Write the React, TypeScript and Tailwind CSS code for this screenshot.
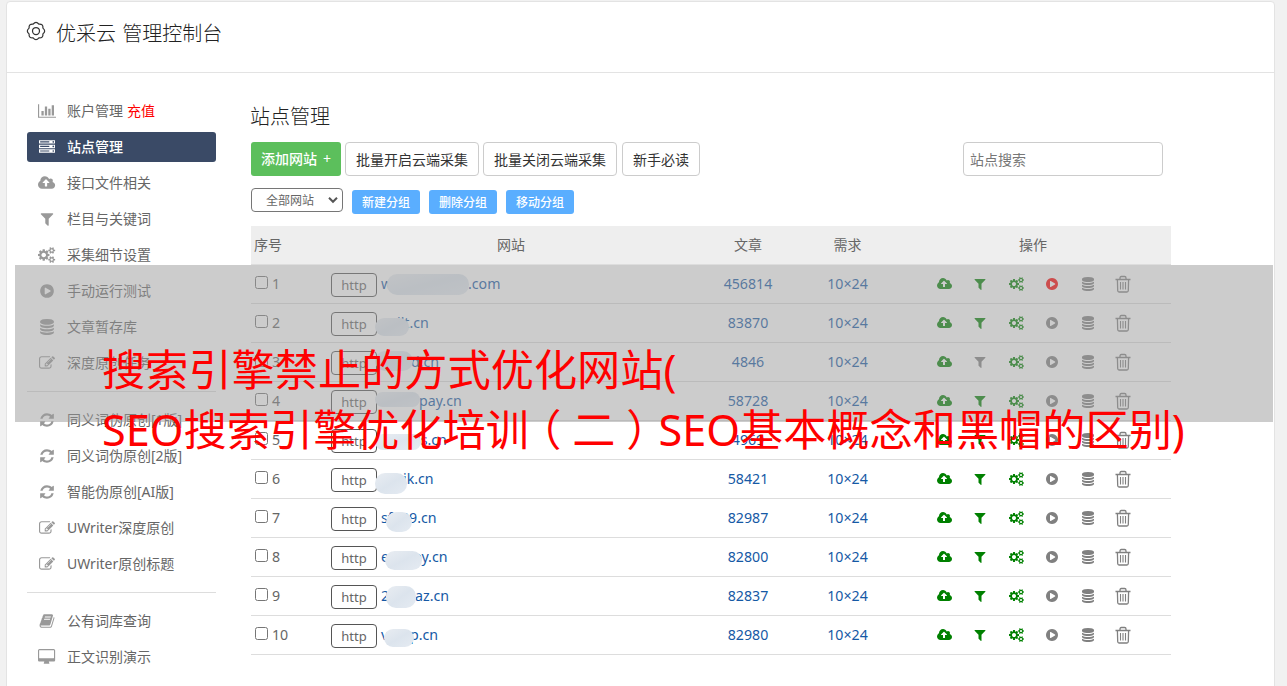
import React from "react";

type IconDef = { vb: string; d: string };

const small =
  "v140q0 16-149 31-12 27-30 52 51 113 51 138 0 4-4 7-122 71-124 71-8 0-46-47t-52-68q-20 2-30 2t-30-2q-14 21-52 68t-46 47q-2 0-124-71-4-3-4-7 0-25 51-138-18-25-30-52-149-15-149-31v-140q0-16 149-31 13-29 30-52-51-113-51-138 0-4 4-7 4-2 35-20t59-34 30-16q8 0 46 46.5t52 67.5q20-2 30-2t30 2q51-71 92-112l6-2q4 0 124 70 4 3 4 7 0 25-51 138 17 23 30 52 149 15 149 31z";

const icons = {
  chart: { vb: "0 0 2048 1792", d: "M640 896v512h-256v-512h256zm384-512v1024h-256v-1024h256zm1024 1152v128h-2048v-1536h128v1408h1920zm-640-896v768h-256v-768h256zm384-384v1152h-256v-1152h256z" },
  server: { vb: "0 0 1792 1792", d: "M128 1408h1024v-128h-1024v128zm0-512h1024v-128h-1024v128zm1568 448q0-40-28-68t-68-28-68 28-28 68 28 68 68 28 68-28 28-68zm-1568-960h1024v-128h-1024v128zm1568 448q0-40-28-68t-68-28-68 28-28 68 28 68 68 28 68-28 28-68zm0-512q0-40-28-68t-68-28-68 28-28 68 28 68 68 28 68-28 28-68zm96 832v384h-1792v-384h1792zm0-512v384h-1792v-384h1792zm0-512v384h-1792v-384h1792z" },
  cloud: { vb: "0 0 1920 1792", d: "M1280 864q0-14-9-23l-352-352q-9-9-23-9t-23 9l-351 351q-10 12-10 24 0 14 9 23t23 9h224v352q0 13 9.5 22.5t22.5 9.5h192q13 0 22.5-9.5t9.5-22.5v-352h224q13 0 22.5-9.5t9.5-22.5zm640 288q0 159-112.5 271.5t-271.5 112.5h-1088q-185 0-316.5-131.5t-131.5-316.5q0-130 70-240t188-165q-2-30-2-43 0-212 150-362t362-150q156 0 285.5 87t188.5 231q71-62 166-62 106 0 181 75t75 181q0 76-41 138 130 31 213.5 135.5t83.5 238.5z" },
  filter: { vb: "0 0 1792 1792", d: "M1595 295q17 41-14 70l-493 493v742q0 42-39 59-13 5-25 5-27 0-45-19l-256-256q-19-19-19-45v-486l-493-493q-31-29-14-70 17-39 59-39h1280q42 0 59 39z" },
  cogs: { vb: "0 0 1920 1792", d: "M896 896q0-106-75-181t-181-75-181 75-75 181 75 181 181 75 181-75 75-181zm768 512q0-52-38-90t-90-38-90 38-38 90q0 53 37.5 90.5t90.5 37.5 90.5-37.5 37.5-90.5zm0-1024q0-52-38-90t-90-38-90 38-38 90q0 53 37.5 90.5t90.5 37.5 90.5-37.5 37.5-90.5zm-384 421v185q0 10-7 19.5t-16 10.5l-155 24q-11 35-32 76 34 48 90 115 7 11 7 20 0 12-7 19-23 30-82.5 89.5t-78.5 59.5q-11 0-21-7l-115-90q-37 19-77 31-11 108-23 155-7 24-30 24h-186q-11 0-20-7.5t-10-17.5l-23-153q-34-10-75-31l-118 89q-7 7-20 7-11 0-21-8-144-133-144-160 0-9 7-19 10-14 41-53t47-61q-23-44-35-82l-152-24q-10-1-17-9.5t-7-19.5v-185q0-10 7-19.5t16-10.5l155-24q11-35 32-76-34-48-90-115-7-11-7-20 0-12 7-20 22-30 82-89t79-59q11 0 21 7l115 90q34-18 77-32 11-108 23-154 7-24 30-24h186q11 0 20 7.5t10 17.5l23 153q34 10 75 31l118-89q8-7 20-7 11 0 21 8 144 133 144 160 0 8-7 19-12 16-42 54t-45 60q23 48 34 82l152 23q10 2 17 10.5t7 19.5zM1920 1338" + small + "M1920 314" + small },
  play: { vb: "0 0 1792 1792", d: "M896 128q209 0 385.5 103t279.5 279.5 103 385.5-103 385.5-279.5 279.5-385.5 103-385.5-103-279.5-279.5-103-385.5 103-385.5 279.5-279.5 385.5-103zm384 823q32-18 32-55t-32-55l-544-320q-31-19-64-1-32 19-32 56v640q0 37 32 56 16 8 32 8 17 0 32-9z" },
  database: { vb: "0 0 1792 1792", d: "M896 768q237 0 443-43t325-127v170q0 69-103 128t-280 93.5-385 34.5-385-34.5-280-93.5-103-128v-170q119 84 325 127t443 43zm0 768q237 0 443-43t325-127v170q0 69-103 128t-280 93.5-385 34.5-385-34.5-280-93.5-103-128v-170q119 84 325 127t443 43zm0-384q237 0 443-43t325-127v170q0 69-103 128t-280 93.5-385 34.5-385-34.5-280-93.5-103-128v-170q119 84 325 127t443 43zm0-1152q208 0 385 34.5t280 93.5 103 128v128q0 69-103 128t-280 93.5-385 34.5-385-34.5-280-93.5-103-128v-128q0-69 103-128t280-93.5 385-34.5z" },
  edit: { vb: "0 0 1792 1792", d: "M888 1184l116-116-152-152-116 116v56h96v96h56zm440-720q-16-16-33 1l-350 350q-17 17-1 33t33-1l350-350q17-17 1-33zm80 594v190q0 119-84.5 203.5t-203.5 84.5h-832q-119 0-203.5-84.5t-84.5-203.5v-832q0-119 84.5-203.5t203.5-84.5h832q63 0 117 25 15 7 18 23 3 17-9 29l-49 49q-14 14-32 8-23-6-45-6h-832q-66 0-113 47t-47 113v832q0 66 47 113t113 47h832q66 0 113-47t47-113v-126q0-13 9-22l64-64q15-15 35-7t20 29zm-96-738l288 288-672 672h-288v-288zm444 132l-92 92-288-288 92-92q28-28 68-28t68 28l152 152q28 28 28 68t-28 68z" },
  refresh: { vb: "0 0 1792 1792", d: "M1639 1056q0 5-1 7-64 268-268 434.5t-478 166.5q-146 0-282.5-55t-243.5-157l-129 129q-19 19-45 19t-45-19-19-45v-448q0-26 19-45t45-19h448q26 0 45 19t19 45-19 45l-137 137q71 66 161 102t187 36q134 0 250-65t186-179q11-17 53-117 8-23 30-23h192q13 0 22.5 9.5t9.5 22.5zm25-800v448q0 26-19 45t-45 19h-448q-26 0-45-19t-19-45 19-45l138-138q-148-137-349-137-134 0-250 65t-186 179q-11 17-53 117-8 23-30 23h-199q-13 0-22.5-9.5t-9.5-22.5v-7q65-268 270-434.5t480-166.5q146 0 284 55.5t245 156.5l130-129q19-19 45-19t45 19 19 45z" },
  book: { vb: "0 0 1792 1792", d: "M1703 478q40 57 18 129l-275 906q-19 64-76.5 107.5t-122.5 43.5h-923q-77 0-148.5-53.5t-99.5-131.5q-24-67-2-127 0-4 3-27t4-37q1-8-3-21.5t-3-19.5q2-11 8-21t16.5-23.5 16.5-23.5q23-38 45-91.5t30-91.5q3-10 .5-30t-.5-28q3-11 17-28t17-23q21-36 42-92t25-90q1-9-2.5-32t.5-28q4-13 22-30.5t22-22.5q19-26 42.5-84.5t27.5-96.5q1-8-3-25.5t-2-26.5q2-8 9-18t18-23 17-21q8-12 16.5-30.5t15-35 16-36 19.5-32 26.5-23.5 36-11.5 47.5 5.5l-1 3q38-9 51-9h761q74 0 114 56t18 130l-274 906q-36 119-71.5 153.5t-128.5 34.5h-869q-27 0-38 15-11 16-1 43 24 70 144 70h923q29 0 56-15.5t35-41.5l300-987q7-22 5-57 38 15 59 43zm-1064 2q-4 13 2 22.5t20 9.5h608q13 0 25.5-9.5t16.5-22.5l21-64q4-13-2-22.5t-20-9.5h-608q-13 0-25.5 9.5t-16.5 22.5zm-83 256q-4 13 2 22.5t20 9.5h608q13 0 25.5-9.5t16.5-22.5l21-64q4-13-2-22.5t-20-9.5h-608q-13 0-25.5 9.5t-16.5 22.5z" },
  desktop: { vb: "-64 0 1920 1792", d: "M1728 992v-832q0-13-9.5-22.5t-22.5-9.5h-1600q-13 0-22.5 9.5t-9.5 22.5v832q0 13 9.5 22.5t22.5 9.5h1600q13 0 22.5-9.5t9.5-22.5zm128-832v1088q0 66-47 113t-113 47h-544q0 37 16 77.5t32 71 16 43.5q0 26-19 45t-45 19h-512q-26 0-45-19t-19-45q0-14 16-44t32-70 16-78h-544q-66 0-113-47t-47-113v-1088q0-66 47-113t113-47h1600q66 0 113 47t47 113z" },
} satisfies Record<string, IconDef>;

type IconName = keyof typeof icons;

function Icon({ name, className }: { name: IconName; className: string }) {
  const icon: IconDef = icons[name];
  return (
    <svg viewBox={icon.vb} className={`w-auto shrink-0 ${className}`} fill="currentColor" fillRule="evenodd">
      <path d={icon.d} />
    </svg>
  );
}

function TrashIcon() {
  return (
    <svg viewBox="0 0 16 18" className="h-[18px] w-4" fill="none" stroke="currentColor" strokeWidth="1.3">
      <path d="M.5 4.5h15M5 4.5V3Q5 1.5 6.3 1.5h3.4Q11 1.5 11 3v1.5M2.4 4.5l.3 11q.1 1.5 1.3 1.5h8q1.2 0 1.3-1.5l.3-11" />
      <path strokeWidth="1.1" d="M5.5 7v7.5M8 7v7.5M10.5 7v7.5" />
    </svg>
  );
}

function GearIcon() {
  return (
    <svg viewBox="-10 -10 20 20" className="size-5" fill="none" stroke="#333" strokeWidth="1.25" strokeLinejoin="round">
      <path d="M-2.87-6.93Q0-10.4 2.87-6.93Q7.35-7.35 6.93-2.87Q10.4 0 6.93 2.87Q7.35 7.35 2.87 6.93Q0 10.4-2.87 6.93Q-7.35 7.35-6.93 2.87Q-10.4 0-6.93-2.87Q-7.35-7.35-2.87-6.93Z" />
      <circle r="3.5" />
    </svg>
  );
}

type MenuItem = { icon: IconName; label: string; extra?: string; active?: boolean };

const menuGroups: MenuItem[][] = [
  [
    { icon: "chart", label: "账户管理", extra: "充值" },
    { icon: "server", label: "站点管理", active: true },
    { icon: "cloud", label: "接口文件相关" },
    { icon: "filter", label: "栏目与关键词" },
    { icon: "cogs", label: "采集细节设置" },
    { icon: "play", label: "手动运行测试" },
    { icon: "database", label: "文章暂存库" },
    { icon: "edit", label: "深度原创任务" },
  ],
  [
    { icon: "refresh", label: "同义词伪原创[1版]" },
    { icon: "refresh", label: "同义词伪原创[2版]" },
    { icon: "refresh", label: "智能伪原创[AI版]" },
    { icon: "edit", label: "UWriter深度原创" },
    { icon: "edit", label: "UWriter原创标题" },
  ],
  [
    { icon: "book", label: "公有词库查询" },
    { icon: "desktop", label: "正文识别演示" },
  ],
];

function Sidebar() {
  return (
    <nav className="w-[189px] shrink-0 pt-[23px]">
      {menuGroups.map((group, g) => (
        <ul key={g} className={g > 0 ? "mt-[13px] border-t border-[#ddd] pt-[13px]" : ""}>
          {group.map((m) => (
            <li
              key={m.label}
              className={`mb-1.5 flex h-[30px] items-center rounded-[3px] text-sm ${m.active ? "bg-[#3a4a66] font-medium text-white" : "text-[#666]"}`}
            >
              <span className={`flex w-10 justify-center ${m.active ? "text-white" : "text-[#999]"}`}>
                <Icon name={m.icon} className="h-4" />
              </span>
              <span className="whitespace-pre">{m.label}</span>
              {m.extra && <span className="ml-1 text-[#f00]">{m.extra}</span>}
            </li>
          ))}
        </ul>
      ))}
    </nav>
  );
}

/* x: left edge of the visible suffix; mask: blot covering the hidden part */
type Row = {
  prefix: string;
  suffix: string;
  x: string;
  mask: string;
  count: string;
  filterOff?: boolean;
  running?: boolean;
};

const rows: Row[] = [
  { prefix: "w", suffix: ".com", x: "left-[137px]", mask: "left-[56px] top-[9px] w-[82px] h-[21px]", count: "456814", running: true },
  { prefix: "", suffix: "jlt.cn", x: "left-[66px]", mask: "left-[44px] top-[14px] w-[34px] h-[18px]", count: "83870" },
  { prefix: "", suffix: "d.cn", x: "left-[80px]", mask: "left-[44px] top-[8px] w-[38px] h-[20px]", count: "4846", filterOff: true },
  { prefix: "", suffix: "pay.cn", x: "left-[88px]", mask: "left-[44px] top-[10px] w-[45px] h-[15px]", count: "58728" },
  { prefix: "", suffix: "is.cn", x: "left-[86px]", mask: "left-[44px] top-[13px] w-[46px] h-[16px]", count: "4969" },
  { prefix: "", suffix: "ik.cn", x: "left-[72px]", mask: "left-[44px] top-[13px] w-[32px] h-[21px]", count: "58421" },
  { prefix: "sf", suffix: "39.cn", x: "left-[70px]", mask: "left-[55px] top-[13px] w-[26px] h-[20px]", count: "82987" },
  { prefix: "e", suffix: "py.cn", x: "left-[82px]", mask: "left-[54px] top-[13px] w-[37px] h-[19px]", count: "82800" },
  { prefix: "2", suffix: "az.cn", x: "left-[84px]", mask: "left-[55px] top-[9px] w-[30px] h-[22px]", count: "82837" },
  { prefix: "v", suffix: "p.cn", x: "left-[79px]", mask: "left-[53px] top-[13px] w-[30px] h-[18px]", count: "82980" },
];

const columns = "grid grid-cols-[80px_360px_114px_85px_281px]";

function SiteRow({ row, index }: { row: Row; index: number }) {
  return (
    <div className={`${columns} h-[39px] items-center border-b border-[#ddd] text-[14.2px] text-[#666]`}>
      <div className="flex items-center pl-1">
        <span className="mb-[3px] mr-1 size-[13px] rounded-[2.5px] border border-[#767676] bg-white" />
        <span>{index + 1}</span>
      </div>
      <div className="relative flex h-[38px] items-center text-[#1559a5]">
        <span className="mt-0.5 flex h-6 w-[46px] items-center justify-center rounded border border-[#555] pt-0.5 text-[13px] text-[#666]">
          http
        </span>
        <span className="ml-1">{row.prefix}</span>
        <span className={`absolute top-2 leading-[22px] ${row.x}`}>{row.suffix}</span>
        <span className={`absolute rounded-[10px] bg-linear-to-br from-[#e9edf2] via-[#dce4ed] to-[#e5ebf2] ${row.mask}`} />
      </div>
      <div className="text-center text-[#1559a5]">{row.count}</div>
      <div className="text-center text-[#1559a5]">10×24</div>
      <div className="flex items-center pl-[36px] text-[green]">
        <span className="flex w-9 justify-center"><Icon name="cloud" className="h-3.5" /></span>
        <span className={`flex w-9 justify-center ${row.filterOff ? "text-[gray]" : ""}`}><Icon name="filter" className="h-3.5" /></span>
        <span className="flex w-9 justify-center"><Icon name="cogs" className="h-3.5" /></span>
        <span className={`flex w-9 justify-center ${row.running ? "text-[red]" : "text-[gray]"}`}><Icon name="play" className="h-3.5" /></span>
        <span className="flex w-9 justify-center text-[gray]"><Icon name="database" className="h-3.5" /></span>
        <span className="flex w-[34px] justify-center text-[gray]"><TrashIcon /></span>
      </div>
    </div>
  );
}

function Main() {
  return (
    <main className="ml-[35px] w-[920px] shrink-0">
      <h2 className="-ml-px pt-[28px] text-xl leading-[32px] font-light text-[#222]">站点管理</h2>
      <div className="mt-[9px] flex h-[34px] items-center text-sm text-[#333]">
        <button className="h-[34px] w-[90px] rounded-[3px] bg-[#5cbf5c] font-medium whitespace-nowrap text-white">
          添加网站<span className="ml-1.5 font-normal">+</span>
        </button>
        <button className="ml-1 h-[34px] w-[134px] rounded border border-[#ccc] pt-0.5">批量开启云端采集</button>
        <button className="ml-1 h-[34px] w-[134px] rounded border border-[#ccc] pt-0.5">批量关闭云端采集</button>
        <button className="ml-[5px] h-[34px] w-[78px] rounded border border-[#ccc] pt-0.5">新手必读</button>
        <div className="ml-auto mr-2 flex h-[34px] w-[200px] items-center rounded border border-[#ccc] px-1.5 pt-0.5 text-[#777]">站点搜索</div>
      </div>
      <div className="mt-3 flex h-[26px] items-start text-xs">
        <div className="flex h-6 w-[92px] items-center justify-between rounded border border-[#767676] pl-3.5 pr-1 text-[#666]">
          <span className="pt-0.5">全部网站</span>
          <svg viewBox="0 0 10 8" className="h-2 w-2.5" fill="none" stroke="#555" strokeWidth="2"><path d="M1 1.8l4 4 4-4" /></svg>
        </div>
        {["新建分组", "删除分组", "移动分组"].map((label) => (
          <button key={label} className="ml-[9px] mt-0.5 h-6 w-[68px] rounded-[3px] bg-[#5aaeff] pt-0.5 font-medium text-white">{label}</button>
        ))}
      </div>
      <div className={`${columns} mt-3 h-[39px] items-center border-b border-[#ddd] bg-[#eee] text-sm text-[#666]`}>
        <span className="pl-[3px]">序号</span>
        <span className="text-center">网站</span>
        <span className="text-center">文章</span>
        <span className="text-center">需求</span>
        <span className="pl-[5px] text-center">操作</span>
      </div>
      {rows.map((row, i) => (
        <SiteRow key={row.count} row={row} index={i} />
      ))}
    </main>
  );
}

function CenteredParen({ children }: { children: string }) {
  return (
    <span className="inline-flex w-[1em] justify-center [font-feature-settings:'halt']">{children}</span>
  );
}

export default function App() {
  return (
    <div className="relative h-[686px] w-[1287px] overflow-hidden bg-[#f1f1f1] px-1.5 pt-px font-['Noto_Sans','Noto_Sans_CJK_SC',sans-serif] font-normal">
      <div className="h-[700px] w-[1269px] rounded border border-[#e3e3e3] bg-white">
        <header className="flex h-[71px] items-start border-b border-[#e3e3e3] pl-[19px] pt-[19px]">
          <GearIcon />
          <h1 className="ml-2.5 -mt-0.5 text-xl leading-[30px] font-light text-[#222] [word-spacing:1px]">优采云 管理控制台</h1>
        </header>
        <div className="flex pl-5">
          <Sidebar />
          <Main />
        </div>
      </div>
      <div className="absolute left-[15px] top-[265px] h-[157px] w-[1258px] bg-[#999]/50" />
      <div className="absolute left-[102px] top-[340px] whitespace-nowrap text-[43.2px] leading-[60px] text-[#f00]">
        <p className="h-[60px]">搜索引擎禁止的方式优化网站(</p>
        <p className="h-[60px]">
          SEO搜索引擎优化培训<CenteredParen>（</CenteredParen>二<CenteredParen>）</CenteredParen>SEO基本概念和黑帽的区别)
        </p>
      </div>
    </div>
  );
}
